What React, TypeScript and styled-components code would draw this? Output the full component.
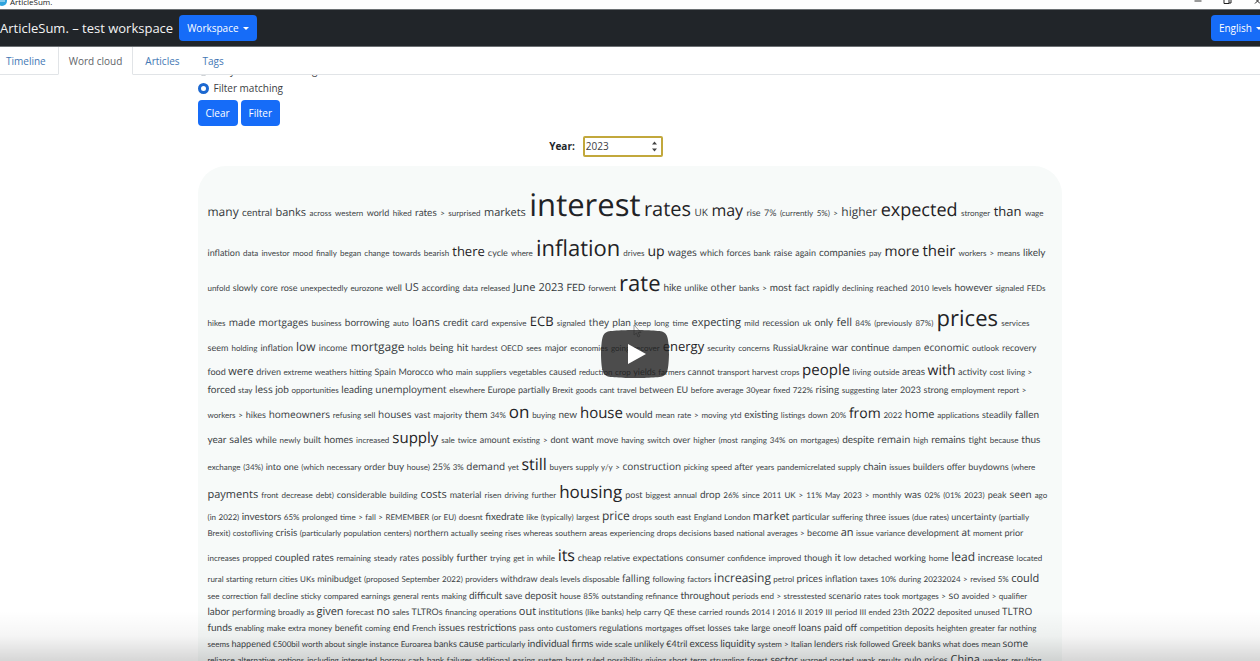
import React from "react";
import styled, { createGlobalStyle } from "styled-components";

const uiFont = `"Open Sans", "Noto Sans", sans-serif`;
const smallFont = `Lato, "Open Sans", sans-serif`;

const GlobalStyle = createGlobalStyle`
  *, *::before, *::after { box-sizing: border-box; }
  body { margin: 0; background: #fff; color: #212529; font-family: ${uiFont}; font-size: 10px; line-height: 15px; }
`;

const Viewport = styled.div`
  position: relative;
  height: 100vh;
  overflow: hidden;
`;

/* The recorded desktop is slightly wider than the viewport and runs off its right edge. */
const Screen = styled.div`
  position: relative;
  display: flex;
  flex-direction: column;
  width: calc(100% + 10px);
  height: 100%;
`;

const TitleBar = styled.header`
  display: flex;
  justify-content: space-between;
  align-items: flex-end;
  flex: none;
  height: 9px;
  overflow: hidden;
  background: #fefefe;
`;

const WindowTitle = styled.div`
  display: flex;
  align-items: flex-end;
  gap: 3px;
  font-size: 8px;
  line-height: 14px;
  color: #222;
`;

const AppIcon = styled.svg`
  width: 7px;
  height: 12px;
  margin-bottom: 2px;
`;

const WindowButtons = styled.svg`
  width: 80px;
  height: 9px;
`;

const NavBar = styled.nav`
  display: flex;
  align-items: center;
  gap: 6px;
  flex: none;
  height: 38px;
  background: #212529;
  border-top: 1px solid #6c7073;
  border-bottom: 1px solid #6c7073;
`;

const Brand = styled.a`
  color: #f4f4f4;
  font-size: 13px;
  line-height: 18px;
  text-decoration: none;
  white-space: nowrap;
`;

const Button = styled.button<{ $end?: boolean }>`
  display: inline-flex;
  align-items: center;
  gap: 4px;
  height: 26px;
  padding: 0 8px;
  margin-left: ${(p) => (p.$end ? "auto" : "0")};
  border: 0;
  border-radius: 4px;
  background: #166cf8;
  color: #fff;
  font: 10px/15px ${uiFont};
`;

const Caret = styled.span`
  border: 3px solid transparent;
  border-top-color: #fff;
  border-bottom: 0;
`;

const Tabs = styled.div`
  display: flex;
  flex: none;
  gap: 1px;
  height: 28px;
  background: #fff;
  border-bottom: 1px solid #e1e4e7;
`;

const Tab = styled.a<{ $active?: boolean }>`
  display: flex;
  align-items: center;
  height: 28px;
  padding: 2px 10px 0;
  border: 1px solid ${(p) => (p.$active ? "#e1e4e7" : "transparent")};
  border-top: 0;
  border-bottom-color: ${(p) => (p.$active ? "#fff" : "transparent")};
  color: ${(p) => (p.$active ? "#5f6468" : "#4377b4")};
  text-decoration: none;
  &:first-child { padding-left: 5px; }
`;

const Main = styled.main`
  flex: 1;
  min-height: 0;
  overflow: hidden;
  padding: 0 11px 0 0;
`;

const Container = styled.div`
  max-width: 864px;
  margin: -14px auto 0;
`;

const RadioRow = styled.label`
  display: flex;
  align-items: center;
  gap: 5px;
  height: 18px;
  color: #3c4044;
`;

const Radio = styled.input`
  appearance: none;
  width: 11px;
  height: 11px;
  margin: 0;
  border: 1px solid #c3c7cb;
  border-radius: 50%;
  background: #fff;
  &:checked { border: 3px solid #1c68d0; }
`;

const Actions = styled.div`
  display: flex;
  gap: 3px;
  margin-top: 3px;
`;

const YearRow = styled.div`
  display: flex;
  justify-content: center;
  align-items: center;
  gap: 8px;
  margin: 10px 0 9px;
  padding-right: 47px;
`;

const YearLabel = styled.label`
  font-weight: 700;
`;

const YearField = styled.span`
  display: flex;
  align-items: center;
  width: 80px;
  height: 21px;
  padding: 0 3px 0 1px;
  border: 2px solid #c2a83c;
  border-radius: 2px;
  background: #fff;
`;

const YearInput = styled.input`
  appearance: textfield;
  flex: 1;
  min-width: 0;
  padding: 0;
  border: 0;
  outline: 0;
  background: none;
  color: #3c4044;
  font: 10px/15px ${uiFont};
  &::-webkit-inner-spin-button { display: none; }
`;

const Cloud = styled.section`
  padding: 15px 12px 30px 10px;
  border-radius: 28px;
  background: #f7faf9;
  text-rendering: geometricPrecision;
`;

const Line = styled.p<{ $inset: number }>`
  display: flex;
  align-items: baseline;
  justify-content: space-between;
  margin: 0;
  padding-right: ${(p) => p.$inset}px;
  white-space: nowrap;
`;

const Word = styled.span<{ $size: number }>`
  font-family: ${(p) => (p.$size < 11 ? smallFont : uiFont)};
  font-size: ${(p) => (p.$size < 11 ? p.$size : Math.round(p.$size * 0.92))}px;
  line-height: ${(p) => (p.$size < 13 ? 1.5 : p.$size < 24 ? 1.65 : 1.6)};
  color: ${(p) => (p.$size < 11 ? "#404447" : p.$size < 14 ? "#34383b" : "#1f2326")};
`;

const BottomShade = styled.div`
  position: absolute;
  inset: auto 0 0 0;
  height: 50px;
  background: linear-gradient(rgba(0, 0, 0, 0), rgba(0, 0, 0, 0.04) 50%, rgba(0, 0, 0, 0.16));
  pointer-events: none;
`;

const PlayButton = styled.button`
  position: absolute;
  left: 50%;
  top: 330px;
  width: 68px;
  height: 48px;
  margin-left: -34px;
  padding: 0;
  border: 0;
  background: none;
  svg { display: block; }
`;

const Pointer = styled.svg`
  position: absolute;
  left: 50%;
  top: 324px;
  margin-left: -2px;
  opacity: 0.7;
`;

/* Each line: free space after its last word, then its words; "word~n" gives a word's weight (8 if absent). */
const lines: [number, string][] = [
  [6, "many~13 central~10 banks~12 across western world~9 hiked rates~10 > surprised markets~12 interest~34 rates~22 UK~11 may~17 rise~9 7%~9 (currently 5%) > higher~13 expected~20 stronger than~14 wage"],
  [4, "inflation~9 data investor mood finally began change towards bearish there~14 cycle~9 where inflation~24 drives up~15 wages~11 which~9 forces~9 bank raise~9 again~9 companies~10 pay more~15 their~16 workers > means likely~10"],
  [4, "unfold slowly~9 core~9 rose~9 unexpectedly eurozone well~9 US~12 according~9 data released June~12 2023~12 FED~10 forwent rate~24 hike~10 unlike~9 other~11 banks > most~10 fact~9 rapidly~9 declining reached~9 2010 levels however~10 signaled FEDs"],
  [20, "hikes made~11 mortgages~11 business borrowing~10 auto loans~12 credit~10 card~9 expensive ECB~14 signaled they~11 plan~10 keep long time expecting~12 mild recession~9 uk only~10 fell~12 84% (previously 87%) prices~24 services"],
  [13, "seem~9 holding inflation~9 low~13 income~9 mortgage~13 holds being~10 hit~10 hardest OECD sees major~9 economies going recover energy~14 security concerns RussiaUkraine~9 war~10 continue~10 dampen economic~11 outlook recovery~9"],
  [17, "food~9 were~12 driven~9 extreme weathers hitting Spain~9 Morocco~9 who~9 main suppliers vegetables caused~9 reduction crop yields~9 farmers cannot~9 transport harvest crops people~16 living outside areas~10 with~15 activity~9 cost living >"],
  [23, "forced~10 stay less~11 job~10 opportunities leading~10 unemployment~11 elsewhere Europe~9 partially~9 Brexit goods cant travel between~9 EU~9 before average 30year fixed 722% rising~10 suggesting later 2023~9 strong~9 employment report >"],
  [10, "workers > hikes~9 homeowners~11 refusing sell houses~11 vast~9 majority them~10 34% on~19 buying new~10 house~16 would~10 mean rate > moving ytd existing~10 listings down 20% from~15 2022 home~12 applications steadily~9 fallen~10"],
  [9, "year~10 sales~11 while~9 newly built~9 homes~10 increased supply~16 sale twice amount~9 existing > dont~9 want~10 move~9 having switch over~9 higher (most ranging 34% on mortgages) despite~10 remain~11 high remains~10 tight~9 because thus~10"],
  [14, "exchange (34%) into~9 one~9 (which necessary order~9 buy~10 house) 25%~9 3% demand~11 yet still~17 buyers supply y/y > construction~11 picking speed after~9 years pandemicrelated supply chain~10 issues builders~9 offer~9 buydowns~9 (where"],
  [2, "payments~12 front decrease debt) considerable~9 building costs~12 material~9 risen driving further housing~18 post~9 biggest annual drop~10 26% since 2011 UK > 11% May 2023 > monthly was~10 02% (01% 2023) peak~9 seen~11 ago"],
  [20, "(in 2022) investors~10 65% prolonged time > fall > REMEMBER (or EU) doesnt fixedrate~10 like (typically) largest price~13 drops south east England London market~12 particular~9 suffering three~9 issues (due rates) uncertainty~9 (partially"],
  [26, "Brexit) costofliving crisis~10 (particularly population centers) northern~9 actually seeing rises whereas southern areas experiencing drops decisions based national averages > become~9 an~12 issue variance development~9 at~11 moment prior~9"],
  [7, "increases propped coupled~10 rates~10 remaining steady rates~9 possibly~9 further~10 trying get in while its~17 cheap~9 relative expectations~9 consumer~9 confidence improved though~9 it~10 low detached working~9 home lead~13 increase~10 located"],
  [10, "rural starting return cities UKs minibudget~9 (proposed September 2022) providers withdraw~9 deals levels disposable falling~11 following factors increasing~13 petrol prices~10 inflation~9 taxes 10% during 20232024 > revised 5% could~12"],
  [22, "see correction fall decline sticky compared earnings general rents making difficult~10 save~9 deposit~10 house 85% outstanding refinance throughout~10 periods end > stresstested scenario~9 rates took mortgages > so~11 avoided > qualifier"],
  [17, "labor~10 performing~9 broadly as given~12 forecast no~12 sales TLTROs~9 financing operations out~12 institutions~9 (like banks) help carry QE these carried rounds 2014 I 2016 II 2019 III period III ended 23th 2022~10 deposited unused TLTRO~11"],
  [13, "funds~10 enabling make extra money benefit~9 coming end~10 French issues~10 restrictions~10 pass onto customers~9 regulations~9 mortgages offset losses~9 take large~9 oneoff loans~10 paid~10 off~10 competition deposits heighten greater far nothing"],
  [21, "seems happened~9 €500bil worth about single instance Euroarea banks~9 cause~10 particularly individual~10 firms~10 wide scale unlikely~9 €4tril~9 excess~10 liquidity~10 system > Italian lenders~9 risk followed Greek~9 banks~9 what does mean some~11"],
  [8, "reliance alternative options including interested borrow cash bank failures additional easing system burst ruled possibility giving short term struggling forest sector~10 warned posted weak results pulp~9 prices~9 China~12 weaker resulting"],
];

function CloudLine({ inset, text }: { inset: number; text: string }) {
  return (
    <Line $inset={inset}>
      {text.split(" ").map((entry, i) => {
        const [word, weight] = entry.split("~");
        return (
          <Word key={i} $size={weight ? Number(weight) : 8}>
            {word}
          </Word>
        );
      })}
    </Line>
  );
}

export default function App() {
  return (
    <Viewport>
      <GlobalStyle />
      <Screen>
        <TitleBar>
          <WindowTitle>
            <AppIcon viewBox="0 0 7 12" aria-hidden="true">
              <circle cx="2" cy="6" r="5" fill="#2ea3dd" />
              <path d="M0 6h1M2 5v2M4 5v2" stroke="#d6f0fb" fill="none" />
            </AppIcon>
            ArticleSum.
          </WindowTitle>
          <WindowButtons viewBox="0 0 80 9" fill="none" stroke="#222" aria-hidden="true">
            <path d="M4.500 1h7" stroke="#777" strokeWidth="1.500" />
            <path d="M34 -1v4.500h5V-1M36 -1h5v4h-2" />
            <path d="M65 3.500l5-5M65 -1.500l5 5" />
          </WindowButtons>
        </TitleBar>
        <NavBar>
          <Brand href="#">ArticleSum. – test workspace</Brand>
          <Button type="button">
            Workspace <Caret />
          </Button>
          <Button type="button" $end>
            English <Caret />
          </Button>
        </NavBar>
        <Tabs>
          <Tab href="#timeline">Timeline</Tab>
          <Tab href="#cloud" $active>Word cloud</Tab>
          <Tab href="#articles">Articles</Tab>
          <Tab href="#tags">Tags</Tab>
        </Tabs>
        <Main>
          <Container>
            <RadioRow>
              <Radio type="radio" name="mode" />
              Only include matching
            </RadioRow>
            <RadioRow>
              <Radio type="radio" name="mode" defaultChecked />
              Filter matching
            </RadioRow>
            <Actions>
              <Button type="button">Clear</Button>
              <Button type="button">Filter</Button>
            </Actions>
            <YearRow>
              <YearLabel htmlFor="year">Year:</YearLabel>
              <YearField>
                <YearInput id="year" type="number" defaultValue={2023} />
                <svg width="7" height="13" viewBox="0 0 7 13" fill="#444" aria-hidden="true">
                  <path d="M1 4.500L3.500 1.500L6 4.500zM1 8.500h5L3.500 11.500z" />
                </svg>
              </YearField>
            </YearRow>
            <Cloud>
              {lines.map(([inset, text], i) => (
                <CloudLine key={i} inset={inset} text={text} />
              ))}
            </Cloud>
          </Container>
        </Main>
        <BottomShade />
        <Pointer width="9" height="14" viewBox="0 0 9 14" aria-hidden="true">
          <path d="M1 1v10l2.500-2 1.500 4 2-1-2-3.500h3z" fill="#fff" stroke="#777" />
        </Pointer>
        <PlayButton type="button" aria-label="Play">
          <svg width="68" height="48" viewBox="0 0 68 48">
            <path
              d="M66.520 7.740c-.780-2.930-2.490-5.410-5.420-6.190C55.790.130 34 0 34 0S12.210.130 6.900 1.550c-2.930.780-4.630 3.260-5.420 6.190C.060 13.050 0 24 0 24s.060 10.950 1.480 16.260c.780 2.930 2.490 5.410 5.420 6.190C12.210 47.870 34 48 34 48s21.790-.130 27.100-1.550c2.930-.780 4.640-3.260 5.420-6.190C67.940 34.950 68 24 68 24s-.060-10.950-1.480-16.260z"
              fill="#212121"
              fillOpacity="0.8"
            />
            <path d="M45 24L27 14v20" fill="#fff" />
          </svg>
        </PlayButton>
      </Screen>
    </Viewport>
  );
}
